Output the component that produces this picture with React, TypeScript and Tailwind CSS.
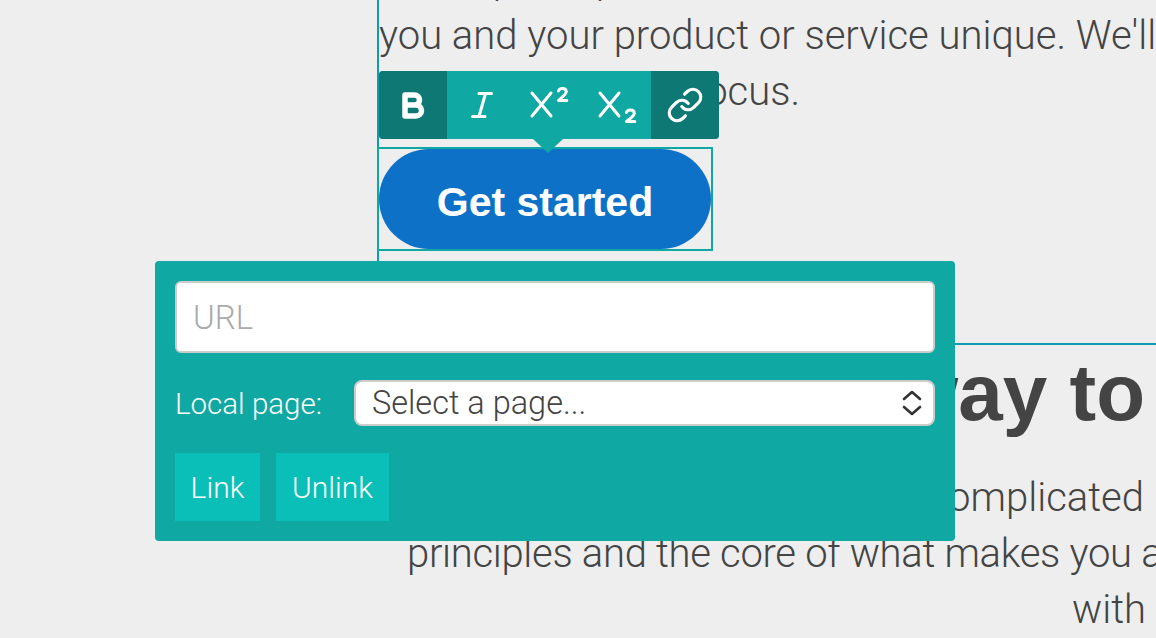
import { Link as LinkIcon } from "lucide-react";

const LIGHT = "font-['Roboto','Liberation_Sans',sans-serif] font-light";
const BOLD = "font-['Liberation_Sans',Arial,sans-serif] font-bold";

// toolbar glyphs, drawn on the 68px button grid
function BoldIcon() {
  return (
    <svg width="68" height="68" viewBox="0 0 68 68" fill="none" stroke="white" strokeWidth="5.5" strokeLinejoin="round" strokeLinecap="round">
      <path d="M26 24h9.5a5 5 0 0 1 0 10H26zM26 34h11a5.5 5.5 0 0 1 0 11H26z" />
    </svg>
  );
}

function ItalicIcon() {
  return (
    <svg width="68" height="68" viewBox="0 0 68 68" fill="none" stroke="white" strokeWidth="3" strokeLinecap="round">
      <path d="M32 22.5h12.5M25.5 45.5h12.5M38.5 22.5l-6.5 23" />
    </svg>
  );
}

function SuperscriptIcon() {
  return (
    <svg width="68" height="68" viewBox="0 0 68 68" fill="none" stroke="white" strokeLinecap="round" strokeLinejoin="round">
      <path d="M17 22l19 23M36 22L17 45" strokeWidth="3" />
      <path d="M43.5 20c.5-2 2.5-2.5 4-2.5 2.5 0 3.8 1.3 3.8 3.3 0 2-1.5 3-3.3 4.5l-4.5 4.2h8.3" strokeWidth="3" />
    </svg>
  );
}

function SubscriptIcon() {
  return (
    <svg width="68" height="68" viewBox="0 0 68 68" fill="none" stroke="white" strokeLinecap="round" strokeLinejoin="round">
      <path d="M17 22l19 23M36 22L17 45" strokeWidth="3" />
      <path d="M43.5 41.5c.5-2 2.5-2.5 4-2.5 2.5 0 3.8 1.3 3.8 3.3 0 2-1.5 3-3.3 4.5l-4.5 3.7h8.3" strokeWidth="3" />
    </svg>
  );
}

function SelectArrows() {
  return (
    <svg width="20" height="26" viewBox="0 0 20 26" fill="none" stroke="#333" strokeWidth="2.6" strokeLinecap="round" strokeLinejoin="round">
      <path d="M2 9l8-7 8 7M2 17l8 7 8-7" />
    </svg>
  );
}

function Toolbar() {
  return (
    <div className="absolute left-[379px] top-[71px] flex h-[68px] w-[340px] rounded-[4px] bg-[#10a8a2]">
      <button type="button" className="h-[68px] w-[68px] rounded-l-[4px] bg-[#0e7875]"><BoldIcon /></button>
      <button type="button" className="h-[68px] w-[68px]"><ItalicIcon /></button>
      <button type="button" className="h-[68px] w-[68px]"><SuperscriptIcon /></button>
      <button type="button" className="h-[68px] w-[68px]"><SubscriptIcon /></button>
      <button type="button" className="flex h-[68px] w-[68px] items-center justify-center rounded-r-[4px] bg-[#0e7875]">
        <LinkIcon size={38} color="white" strokeWidth={2} />
      </button>
      {/* little pointer under the bar */}
      <div className="absolute left-[154px] top-[68px] h-0 w-0 border-x-[15px] border-t-[14px] border-x-transparent border-t-[#10a8a2]" />
    </div>
  );
}

function LinkPanel() {
  return (
    <div className={`absolute left-[155px] top-[261px] flex h-[280px] w-[800px] flex-col rounded-[4px] bg-[#10a8a2] p-5 ${LIGHT}`}>
      <input
        placeholder="URL"
        className="h-[72px] w-full rounded-[6px] border-2 border-[#ccc] bg-white px-4 text-[33px] text-[#444] outline-none placeholder:text-[#aaa]"
      />
      <div className="mt-[27px] flex h-[46px] items-center">
        <label className="mt-[2px] w-[179px] text-[29.5px] text-white">Local page:</label>
        <div className="relative flex-1">
          <select className="h-[46px] w-full appearance-none rounded-[8px] border-2 border-[#ccc] bg-white px-4 text-[32.5px] leading-[38px] text-[#444] outline-none">
            <option>Select a page...</option>
          </select>
          <span className="pointer-events-none absolute right-[13px] top-[10px]"><SelectArrows /></span>
        </div>
      </div>
      <div className="mt-[27px] flex gap-4">
        <button type="button" className="h-[68px] w-[85px] bg-[#0abfb8] text-[30px] text-white">Link</button>
        <button type="button" className="h-[68px] w-[113px] bg-[#0abfb8] text-[30px] text-white">Unlink</button>
      </div>
    </div>
  );
}

export default function App() {
  return (
    <div className="relative h-[638px] w-[1156px] overflow-hidden bg-[#eee] text-[#444]">
      <div className="ml-[377px] flex h-[343px] flex-col border-l-2 border-[#109cb0]">
        <div className={`-mt-[48px] text-[40px] leading-[56px] ${LIGHT}`}>
          <p className="h-[56px] whitespace-nowrap pl-[1px]">Brand proof points</p>
          <p className="h-[56px] whitespace-nowrap">you and your product or service unique. We'll</p>
          <p className="h-[56px] w-[421px] whitespace-nowrap text-right">bring it all into focus.</p>
        </div>
        <div className="mt-[29px] h-[100px] w-[332px] outline-2 outline-[#10a8a2]">
          <button type="button" className={`block h-[100px] w-full rounded-full bg-[#0e71c8] pt-[8px] text-[41px] text-white ${BOLD}`}>
            Get started
          </button>
        </div>
      </div>

      <div className="ml-[377px] border-t-2 border-[#109cb0]">
        <h2 className={`mt-[10px] h-[76px] whitespace-nowrap pr-[11px] text-right text-[80px] leading-[76px] ${BOLD}`}>
          A better way to
        </h2>
        <div className={`mt-[39px] text-[40px] leading-[56px] ${LIGHT}`}>
          <p className="h-[56px] whitespace-nowrap pr-[12px] text-right">Branding can be complicated</p>
          <p className="h-[56px] whitespace-nowrap pl-[30px] tracking-[-0.3px]">principles and the core of what makes you a</p>
          <p className="h-[56px] whitespace-nowrap pr-[10px] text-right">with</p>
        </div>
      </div>

      <Toolbar />
      <LinkPanel />
    </div>
  );
}
